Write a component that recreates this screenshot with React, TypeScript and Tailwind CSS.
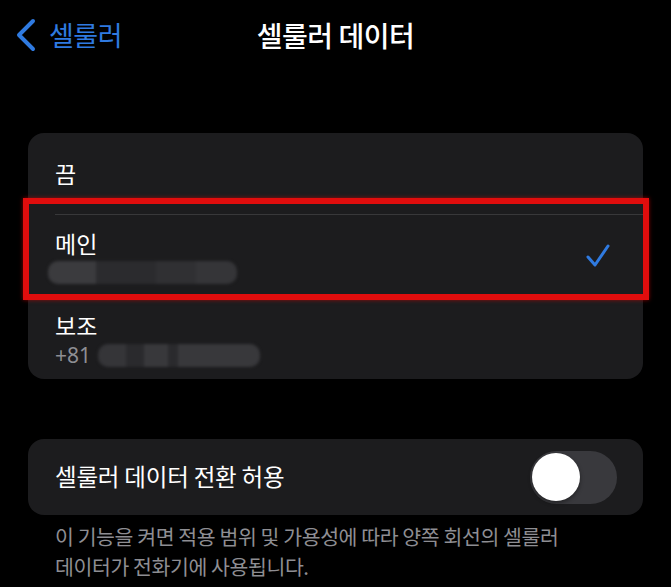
import React from 'react';

const font = { fontFamily: '"Noto Sans CJK KR", "Noto Sans", sans-serif' };

const Blur: React.FC<{ parts: { w: number; c: string }[] }> = ({ parts }) => (
  <div className="flex h-[23px] overflow-hidden rounded-[10px] blur-[1.5px]">
    {parts.map((p, i) => (
      <div key={i} className="h-full" style={{ width: p.w, background: p.c }} />
    ))}
  </div>
);

const App: React.FC = () => {
  return (
    <div className="min-h-[587px] w-full bg-black text-white" style={font}>
      {/* Navigation bar */}
      <div className="grid h-[70px] grid-cols-[1fr_auto_1fr] items-center">
        <div className="flex items-center gap-[12px] pl-[15px] text-[#2f7ae0]">
          <svg width="22" height="34" viewBox="0 0 22 34" fill="none">
            <path d="M18 3 L4 17 L18 31" stroke="#2f7ae0" strokeWidth="4" strokeLinecap="round" strokeLinejoin="round" />
          </svg>
          <span className="text-[27px] tracking-[-0.5px]">셀룰러</span>
        </div>
        <div className="text-[28px] font-medium tracking-[-0.5px]">셀룰러 데이터</div>
        <div />
      </div>

      {/* SIM selection */}
      <div className="relative mx-[28px] mt-[63px] rounded-[16px] bg-[#1c1c1e]">
        <div className="flex h-[81px] items-center pl-[27px] text-[23px]">끔</div>
        <div className="ml-[27px] h-px bg-[#38383a]" />
        <div className="flex h-[81px] items-center justify-between pl-[27px] pr-[33px]">
          <div className="flex flex-col">
            <span className="text-[23px] leading-[32px]">메인</span>
            <div className="-ml-[7px] mt-[2px] w-[189px]">
              <Blur
                parts={[
                  { w: 48, c: '#3b3b3e' },
                  { w: 60, c: '#2b2b2e' },
                  { w: 40, c: '#303033' },
                  { w: 41, c: '#353538' },
                ]}
              />
            </div>
          </div>
          <svg width="24" height="24" viewBox="0 0 24 24" fill="none">
            <path d="M2 13 L9 21 L22 2" stroke="#2f7ae0" strokeWidth="3" strokeLinecap="round" strokeLinejoin="round" />
          </svg>
        </div>
        <div className="ml-[27px] h-px bg-[#38383a]" />
        <div className="flex h-[82px] flex-col justify-center gap-[4px] pl-[27px]">
          <span className="text-[23px] leading-[30px]">보조</span>
          <div className="flex items-center gap-[7px]">
            <span className="text-[21px] leading-[22px] text-[#8e8e93]" style={{ fontFamily: '"Noto Sans", sans-serif' }}>
              +81
            </span>
            <div className="w-[162px]">
              <Blur
                parts={[
                  { w: 28, c: '#353538' },
                  { w: 18, c: '#2a2a2d' },
                  { w: 24, c: '#38383b' },
                  { w: 10, c: '#2a2a2d' },
                  { w: 82, c: '#38383b' },
                ]}
              />
            </div>
          </div>
        </div>

        {/* highlight annotation */}
        <div className="pointer-events-none absolute left-[-5px] top-[65px] h-[102px] w-[626px] border-[6px] border-[#e00d0d] shadow-[0_0_4px_rgba(230,0,0,0.6)]" />
      </div>

      {/* Cellular data switching */}
      <div className="mx-[28px] mt-[60px] flex h-[76px] items-center justify-between rounded-[16px] bg-[#1c1c1e] pl-[27px] pr-[26px]">
        <span className="text-[23.5px] tracking-[-0.2px]">셀룰러 데이터 전환 허용</span>
        <div className="flex h-[53px] w-[87px] items-center rounded-full bg-[#39393d] px-[2px]">
          <div className="h-[48px] w-[48px] rounded-full bg-white shadow-[0_2px_4px_rgba(0,0,0,0.4)]" />
        </div>
      </div>
      <p className="px-[55px] pt-[6px] text-[20.5px] leading-[30px] tracking-[-0.4px] text-[#8e8e93]">
        이 기능을 켜면 적용 범위 및 가용성에 따라 양쪽 회선의 셀룰러
        <br />
        데이터가 전화기에 사용됩니다.
      </p>
    </div>
  );
};

export default App;
